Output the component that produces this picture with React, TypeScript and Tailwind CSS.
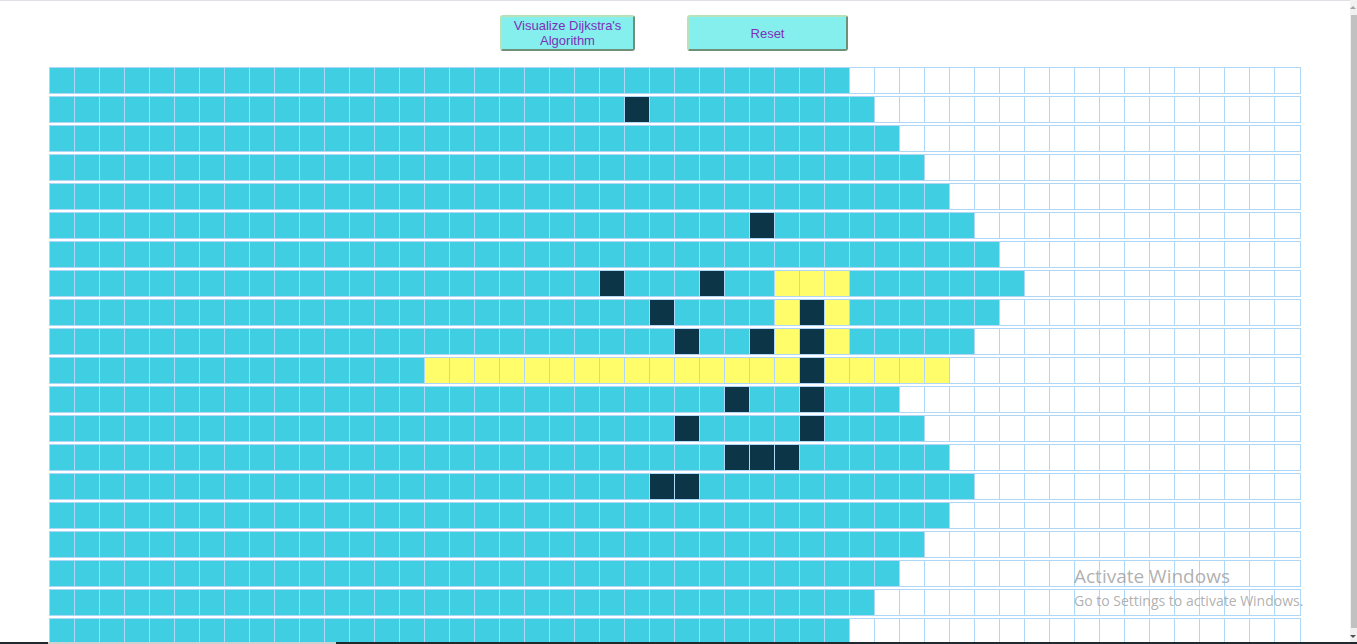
import React from "react";

const ROWS = 20;
const COLS = 50;

// how many cells from the left were visited in each row
const visitedTo = [32, 33, 34, 35, 36, 37, 38, 39, 38, 37, 15, 34, 35, 36, 37, 36, 35, 34, 33, 32];

const walls = new Set([
  "1-23",
  "5-28",
  "7-22", "7-26",
  "8-24", "8-30",
  "9-25", "9-28", "9-30",
  "10-30",
  "11-27", "11-30",
  "12-25", "12-30",
  "13-27", "13-28", "13-29",
  "14-24", "14-25",
]);

const path = new Set(["7-29", "7-30", "7-31", "8-29", "8-31", "9-29", "9-31"]);
for (let c = 15; c <= 35; c++) path.add(`10-${c}`);

function cellClass(r: number, c: number) {
  const key = `${r}-${c}`;
  if (walls.has(key)) return "bg-[#0c3547]";
  if (path.has(key)) return "bg-[#fffe6a]";
  if (c < visitedTo[r]) return "bg-[#40cee3]";
  return "bg-white";
}

function Node({ r, c }: { r: number; c: number }) {
  return (
    <div
      className={`w-[25px] h-[25px] shrink-0 outline outline-1 outline-[#afd8f8] ${cellClass(r, c)}`}
    />
  );
}

function Button({ children, width }: { children: React.ReactNode; width: string }) {
  return (
    <button
      className={`${width} h-[36px] rounded-[3px] border-2 border-t-[#b6e3b8] border-l-[#b6e3b8] border-b-[#6e8f79] border-r-[#6e8f79] bg-[#85efed] text-[#7d30b8] text-[13px] leading-[15px] font-['Liberation_Sans',Arial,sans-serif] px-2`}
    >
      {children}
    </button>
  );
}

export default function App() {
  return (
    <div className="relative flex h-[644px] w-[1357px] overflow-hidden bg-white font-['Liberation_Sans',Arial,sans-serif]">
      <main className="w-[1350px] shrink-0 border-t border-[#dee2e6] flex flex-col items-center">
        <div className="flex gap-[52px] pt-[14px] -translate-x-[1px]">
          <Button width="w-[135px]">Visualize Dijkstra's Algorithm</Button>
          <Button width="w-[161px]">Reset</Button>
        </div>
        <div className="mt-[17px] flex flex-col gap-[4px]">
          {Array.from({ length: ROWS }, (_, r) => (
            <div key={r} className="flex">
              {Array.from({ length: COLS }, (_, c) => (
                <Node key={c} r={r} c={c} />
              ))}
            </div>
          ))}
        </div>
      </main>

      {/* scrollbar */}
      <div className="w-[7px] shrink-0 bg-[#f1f1f1] flex flex-col items-end">
        <div className="h-[15px] w-full flex items-center justify-end pr-[1px]">
          <div className="w-0 h-0 border-l-[3px] border-r-[3px] border-b-[3px] border-l-transparent border-r-transparent border-b-[#a3a3a3]" />
        </div>
        <div className="flex-1 w-[6px] bg-[#c1c1c1]" />
        <div className="h-[16px] w-full flex items-center justify-end pr-[1px]">
          <div className="w-0 h-0 border-l-[3px] border-r-[3px] border-t-[3px] border-l-transparent border-r-transparent border-t-[#505050]" />
        </div>
      </div>

      {/* windows activation watermark */}
      <div className="absolute left-[1074px] top-[564px] text-[#9c9c9c]/80 font-['Open_Sans','Noto_Sans',sans-serif] pointer-events-none whitespace-nowrap">
        <div className="text-[19px] leading-[25px]">Activate Windows</div>
        <div className="text-[14px] leading-[19px] mt-[2px]">Go to Settings to activate Windows.</div>
      </div>

      {/* taskbar edge */}
      <div className="absolute bottom-0 left-0 w-full h-[2px] flex">
        <div className="w-[48px] bg-[#1f2a30]" />
        <div className="w-[288px] bg-[#d0d0d0]" />
        <div className="flex-1 bg-[#1f2a30]" />
      </div>
    </div>
  );
}
